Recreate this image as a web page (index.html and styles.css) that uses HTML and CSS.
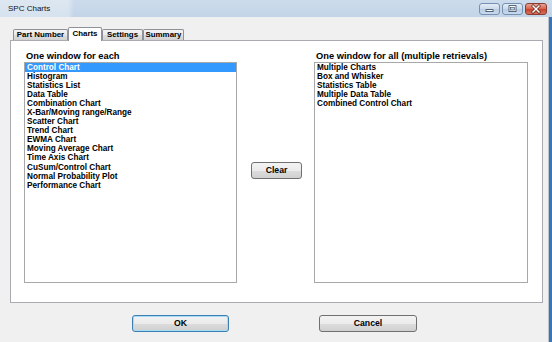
FILE: index.html
```html
<!DOCTYPE html>
<html>
<head>
<meta charset="utf-8">
<title>SPC Charts</title>
<link rel="stylesheet" href="styles.css">
</head>
<body>
<div class="window">
  <div class="titlebar">
    <span class="title">SPC Charts</span>
    <div class="controls">
      <span class="cbtn">
        <svg width="19" height="10" viewBox="0 0 19 10"><rect x="6" y="5.6" width="7" height="2" fill="#fff" stroke="#34465c" stroke-width="0.8"/></svg>
      </span>
      <span class="cbtn">
        <svg width="19" height="10" viewBox="0 0 19 10"><rect x="6" y="1.6" width="7" height="6" fill="#fff" stroke="#34465c" stroke-width="0.8"/><rect x="7.6" y="3.6" width="3.8" height="2.4" fill="#c4d5e9" stroke="#34465c" stroke-width="0.6"/></svg>
      </span>
      <span class="cbtn close">
        <svg width="20" height="10" viewBox="0 0 20 10"><path d="M7 2 L13 8 M13 2 L7 8" stroke="#5a1f16" stroke-width="2.8" stroke-linecap="square"/><path d="M7 2 L13 8 M13 2 L7 8" stroke="#fff" stroke-width="1.5" stroke-linecap="square"/></svg>
      </span>
    </div>
  </div>
  <div class="client">
    <div class="tabstrip">
      <span class="tab t-part">Part Number</span>
      <span class="tab active t-charts">Charts</span>
      <span class="tab t-settings">Settings</span>
      <span class="tab t-summary">Summary</span>
    </div>
    <div class="panel">
      <div class="col col-left">
        <div class="label">One window for each</div>
        <ul class="list">
          <li class="selected">Control Chart</li>
          <li>Histogram</li>
          <li>Statistics List</li>
          <li>Data Table</li>
          <li>Combination Chart</li>
          <li>X-Bar/Moving range/Range</li>
          <li>Scatter Chart</li>
          <li>Trend Chart</li>
          <li>EWMA Chart</li>
          <li>Moving Average Chart</li>
          <li>Time Axis Chart</li>
          <li>CuSum/Control Chart</li>
          <li>Normal Probability Plot</li>
          <li>Performance Chart</li>
        </ul>
      </div>
      <div class="mid">
        <button class="btn clear">Clear</button>
      </div>
      <div class="col col-right">
        <div class="label">One window for all (multiple retrievals)</div>
        <ul class="list">
          <li>Multiple Charts</li>
          <li>Box and Whisker</li>
          <li>Statistics Table</li>
          <li>Multiple Data Table</li>
          <li>Combined Control Chart</li>
        </ul>
      </div>
    </div>
    <div class="actions">
      <button class="btn ok default">OK</button>
      <button class="btn cancel">Cancel</button>
    </div>
  </div>
</div>
</body>
</html>
```

FILE: styles.css
```css
html, body {
  margin: 0;
  padding: 0;
}
body {
  width: 552px;
  height: 342px;
  overflow: hidden;
  background: #f0f0f0;
  font-family: "Liberation Sans", Arial, sans-serif;
  color: #000;
}
.window {
  height: 342px;
  display: flex;
  flex-direction: column;
}
.titlebar {
  height: 17px;
  flex: none;
  display: flex;
  align-items: flex-start;
  padding: 0 5px 0 8px;
  background:
    linear-gradient(90deg, rgba(255,255,255,0.32) 0, rgba(255,255,255,0.32) 68px, rgba(255,255,255,0) 74px),
    linear-gradient(#cddcec, #c3d4e8);
}
.title {
  flex: 1;
  font-size: 8px;
  line-height: 17px;
  color: #111;
}
.controls {
  display: flex;
  gap: 2px;
  margin-top: 3px;
}
.cbtn {
  width: 21px;
  height: 12px;
  box-sizing: border-box;
  border: 1px solid #7590b0;
  border-radius: 3px;
  background: linear-gradient(#e3ecf6, #cbdaeb 50%, #b8cce3 51%, #c9daee);
  display: flex;
  align-items: center;
  justify-content: center;
}
.cbtn.close {
  width: 22px;
  border-color: #8a3d33;
  background: linear-gradient(#e9a596, #d76049 50%, #c6412a 51%, #d3715c);
}
.client {
  flex: 1;
  padding: 9px 6px 0 10px;
  border-right: 3px solid #3a76b4;
  box-shadow: inset -1px 0 0 #b9c4cf;
}
.tabstrip {
  height: 14px;
  display: flex;
  align-items: flex-end;
  padding-left: 3px;
}
.tab {
  box-sizing: border-box;
  height: 11px;
  border: 1px solid #8e9197;
  border-bottom: none;
  border-radius: 2px 2px 0 0;
  background: linear-gradient(#f3f3f3, #ebebeb 50%, #dedede 51%, #d2d2d2);
  font-size: 7.9px;
  font-weight: bold;
  line-height: 10px;
  text-align: center;
  white-space: nowrap;
}
.tab.active {
  height: 14px;
  margin-bottom: -1px;
  background: #fff;
  position: relative;
  z-index: 1;
  line-height: 11px;
}
.t-part { width: 55px; }
.t-charts { width: 34px; }
.t-settings { width: 41px; }
.t-summary { width: 41px; }
.panel {
  box-sizing: border-box;
  height: 263px;
  border: 1px solid #a9abb0;
  background: #fff;
  display: flex;
  align-items: flex-start;
  padding: 10px 14px 0 13px;
}
.col {
  display: flex;
  flex-direction: column;
}
.col-left { width: 213px; }
.col-right { width: 214px; }
.label {
  font-size: 9.3px;
  font-weight: bold;
  line-height: 10px;
  height: 10px;
  margin: 0 0 1px 2px;
  white-space: nowrap;
}
.list {
  box-sizing: border-box;
  height: 221px;
  margin: 0;
  padding: 0;
  list-style: none;
  border: 1px solid #a8a8a8;
  background: #fff;
}
.list li {
  font-size: 8.2px;
  font-weight: bold;
  line-height: 9.4px;
  height: 9.05px;
  padding-left: 2px;
  white-space: nowrap;
}
.list li.selected {
  background: #3399ff;
  color: #fff;
}
.mid {
  margin: 0 12px 0 14px;
}
.btn {
  box-sizing: border-box;
  height: 17px;
  padding: 0;
  border: 1px solid #707070;
  border-radius: 3px;
  background: linear-gradient(#f3f3f3, #ebebeb 50%, #dddddd 51%, #d0d0d0);
  font-family: "Liberation Sans", Arial, sans-serif;
  font-size: 8.7px;
  font-weight: bold;
  color: #000;
  line-height: 15px;
}
.btn.clear {
  width: 51px;
  margin-top: 111px;
}
.actions {
  margin-top: 12px;
  display: flex;
  gap: 90px;
  padding-left: 122px;
}
.btn.ok { width: 97px; }
.btn.cancel { width: 98px; }
.btn.default {
  border-color: #3c7fb1;
  box-shadow: inset 0 0 0 1px #a8dcf6;
  background: linear-gradient(#f2f2f2, #eaeaea 50%, #dcdcdc 51%, #cfcfcf);
}
```
